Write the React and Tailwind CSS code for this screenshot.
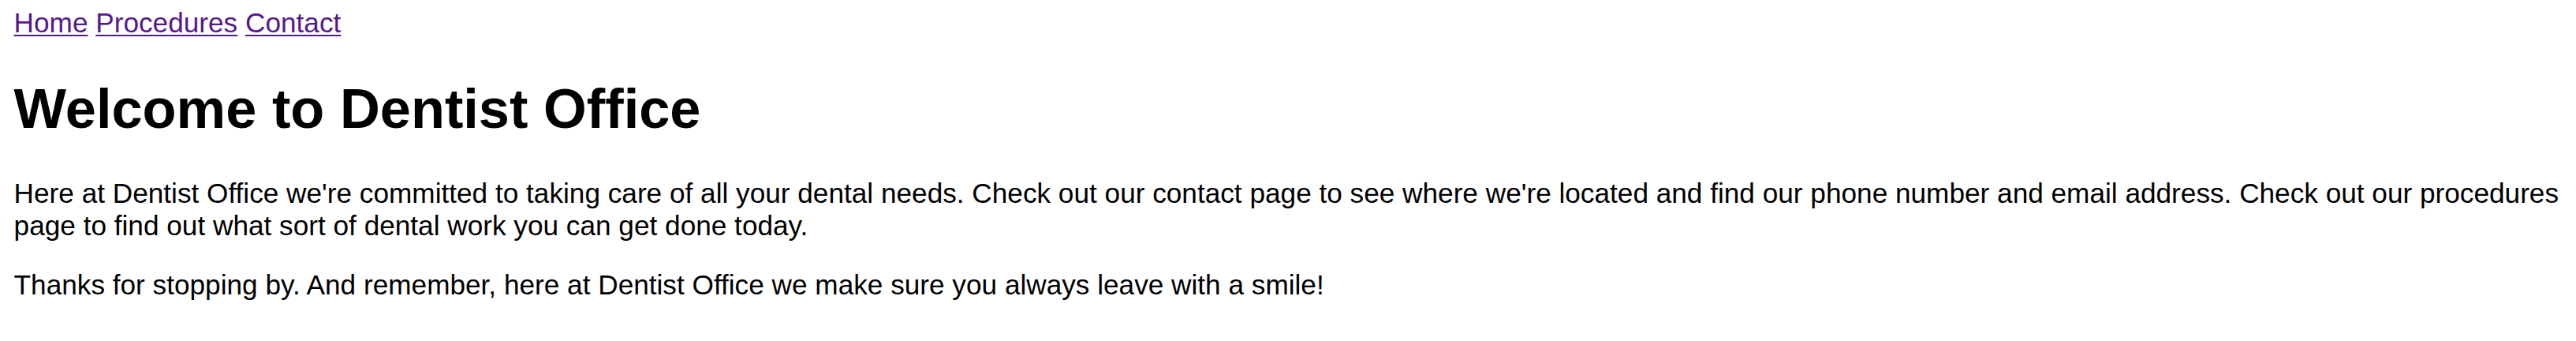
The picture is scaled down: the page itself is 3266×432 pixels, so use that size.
import React from "react";

export default function App() {
  return (
    <div className="flex flex-col bg-white pl-[17.6px] pr-[16px] pt-[8.5px] pb-[40px] text-black font-['Liberation_Sans',Arial,sans-serif]">
      <nav className="text-[35.2px] leading-[40.5px]">
        <a href="#home" className="text-[#551a8b] underline decoration-[2px] underline-offset-[3px]">Home</a>{" "}
        <a href="#procedures" className="text-[#551a8b] underline decoration-[2px] underline-offset-[3px]">Procedures</a>{" "}
        <a href="#contact" className="text-[#551a8b] underline decoration-[2px] underline-offset-[3px]">Contact</a>
      </nav>
      <h1 className="mt-[48px] text-[70.4px] leading-[81px] font-bold">Welcome to Dentist Office</h1>
      <p className="mt-[47px] text-[35.2px] leading-[40.5px]">
        Here at Dentist Office we're committed to taking care of all your dental needs. Check out our contact page to see where we're located and find our phone number and email address. Check out our procedures page to find out what sort of dental work you can get done today.
      </p>
      <p className="mt-[35.2px] text-[35.2px] leading-[40.5px]">
        Thanks for stopping by. And remember, here at Dentist Office we make sure you always leave with a smile!
      </p>
    </div>
  );
}
